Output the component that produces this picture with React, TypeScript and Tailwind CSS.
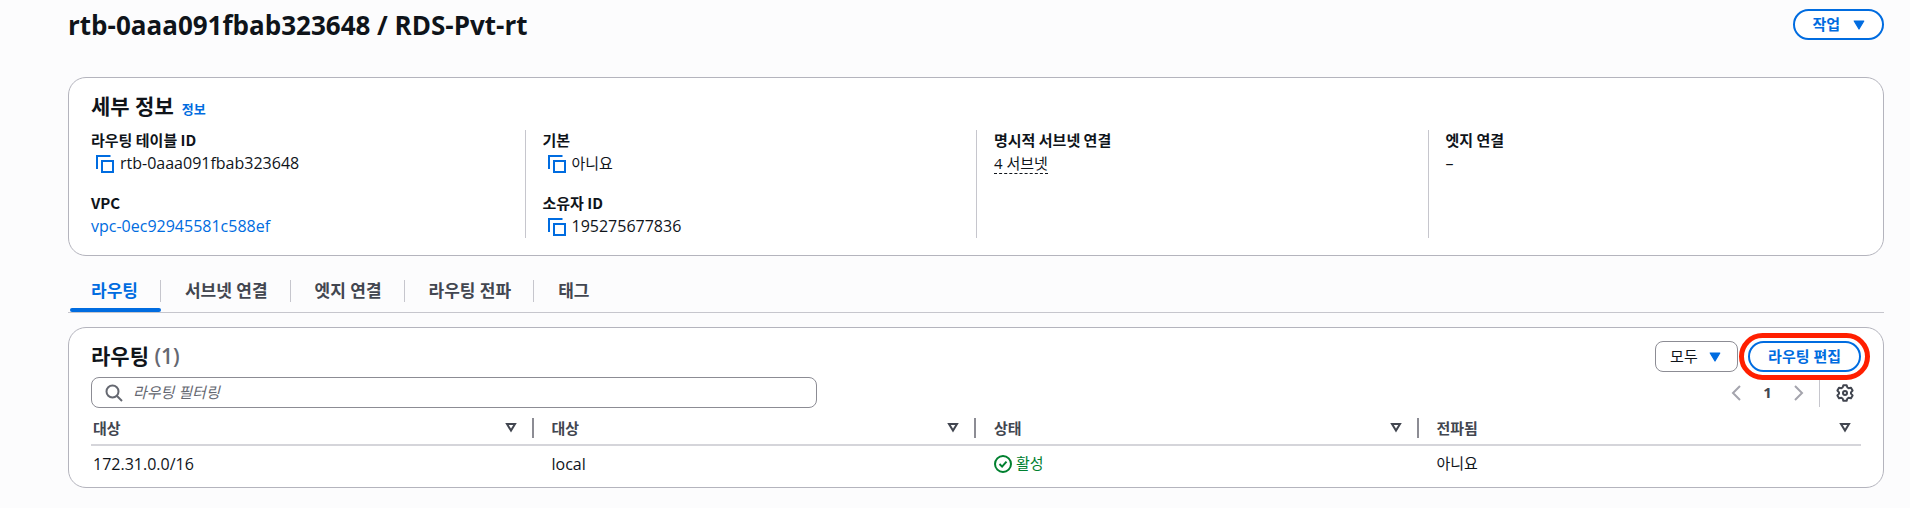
import React from "react";

function CopyIcon() {
  return (
    <svg width="18" height="18" viewBox="0 0 18 18" fill="none" stroke="#006ce0" strokeWidth="2" aria-hidden="true">
      <path d="M14.5 1H1v13" />
      <path d="M6 6h11v11H6z" />
    </svg>
  );
}

function Caret() {
  return (
    <svg width="12" height="10" viewBox="0 0 12 10" aria-hidden="true">
      <path d="M1.2 1h9.6L6 9z" fill="#006ce0" stroke="#006ce0" strokeWidth="1.2" strokeLinejoin="round" />
    </svg>
  );
}

function SortIcon() {
  return (
    <svg width="12" height="11" viewBox="0 0 12 11" fill="none" stroke="#424650" strokeWidth="2" aria-hidden="true">
      <path d="M2 2h8L6 8.6z" />
    </svg>
  );
}

function Copyable({ children }: { children: React.ReactNode }) {
  return (
    <div className="flex items-center gap-[6px] pl-[5px]">
      <button type="button" aria-label="복사">
        <CopyIcon />
      </button>
      <span>{children}</span>
    </div>
  );
}

function Field({ label, children }: { label: string; children: React.ReactNode }) {
  return (
    <div>
      <dt className="h-[22px] font-['Noto_Sans_CJK_KR',sans-serif] text-[15px] leading-5 font-bold">{label}</dt>
      <dd className="h-[23px] leading-[23px]">{children}</dd>
    </div>
  );
}

const tabs = ["라우팅", "서브넷 연결", "엣지 연결", "라우팅 전파", "태그"];
const headers = ["대상", "대상", "상태", "전파됨"];
const columnClass =
  "grid content-start gap-[18px] border-[#c6c6cd] not-first:-ml-[18px] not-first:border-l not-first:pl-[17px]";
const cardClass = "rounded-[18px] border border-[#b4b4bd] bg-white px-[22px]";

export default function App() {
  return (
    <main className="min-h-screen bg-[#fcfcfd] pr-[26px] pl-[68px] font-['Open_Sans','Noto_Sans_CJK_KR',sans-serif] text-base text-[#0f141a]">
      <header className="flex items-start justify-between pt-[9px]">
        <h1 className="text-[26px] leading-8 font-bold">rtb-0aaa091fbab323648 / RDS-Pvt-rt</h1>
        <button
          type="button"
          className="flex h-[31px] items-center gap-[13px] rounded-full border-2 border-[#006ce0] bg-white px-[17px] text-[15px] font-bold text-[#006ce0]"
        >
          작업
          <Caret />
        </button>
      </header>

      <section className={`${cardClass} mt-9 pt-4 pb-[17px]`}>
        <div className="flex items-baseline gap-2">
          <h2 className="text-[21px] leading-6 font-bold">세부 정보</h2>
          <a href="#info" className="text-[13px] leading-4 font-bold text-[#006ce0]">
            정보
          </a>
        </div>
        <dl className="mt-3 grid grid-cols-4 gap-9">
          <div className={columnClass}>
            <Field label="라우팅 테이블 ID">
              <Copyable>rtb-0aaa091fbab323648</Copyable>
            </Field>
            <Field label="VPC">
              <a href="#vpc" className="font-medium text-[#006ce0]">
                vpc-0ec92945581c588ef
              </a>
            </Field>
          </div>
          <div className={columnClass}>
            <Field label="기본">
              <Copyable>
                <span className="text-[15px]">아니요</span>
              </Copyable>
            </Field>
            <Field label="소유자 ID">
              <Copyable>195275677836</Copyable>
            </Field>
          </div>
          <div className={columnClass}>
            <Field label="명시적 서브넷 연결">
              <button type="button" className="border-b border-dashed border-[#0f141a] text-[15px] leading-5">
                4 서브넷
              </button>
            </Field>
          </div>
          <div className={columnClass}>
            <Field label="엣지 연결">–</Field>
          </div>
        </dl>
      </section>

      <div role="tablist" className="flex border-b border-[#c6c6cd] pt-[18px] pl-[2px]">
        {tabs.map((tab, i) => (
          <div key={tab} className="group flex flex-col">
            <button
              type="button"
              role="tab"
              aria-selected={i === 0}
              className="my-[6px] h-[22px] border-[#c6c6cd] pr-[22px] pl-6 text-[17px] leading-[22px] font-bold text-[#424650] group-first:pl-[21px] group-not-last:border-r aria-selected:text-[#006ce0]"
            >
              {tab}
            </button>
            <span className="h-[4px] rounded-full group-first:bg-[#006ce0]" />
          </div>
        ))}
      </div>

      <section className={`${cardClass} mt-[14px] pt-[13px] pb-[6px]`}>
        <div className="flex items-center justify-between">
          <h2 className="text-[21px] leading-[31px] font-bold">
            라우팅 <span className="font-semibold text-[#656871]">(1)</span>
          </h2>
          <div className="flex gap-[10px]">
            <div className="relative">
              <select
                aria-label="보기"
                className="h-[31px] w-[83px] appearance-none rounded-lg border border-[#8c8c94] bg-white pl-[14px] text-[15px]"
              >
                <option>모두</option>
              </select>
              <span className="pointer-events-none absolute top-[11px] right-[17px]">
                <Caret />
              </span>
            </div>
            <div className="relative">
              <button
                type="button"
                className="h-[31px] rounded-full border-2 border-[#006ce0] bg-white px-[18px] text-[15px] font-bold text-[#006ce0]"
              >
                라우팅 편집
              </button>
              <span className="pointer-events-none absolute -inset-x-[9px] -inset-y-2 rounded-full border-[5px] border-[#ff1f00]" />
            </div>
          </div>
        </div>

        <div className="mt-[5px] flex items-center justify-between">
          <label className="flex h-[31px] w-[41%] items-center gap-[10px] rounded-lg border border-[#8c8c94] bg-white px-[13px]">
            <svg width="18" height="18" viewBox="0 0 18 18" fill="none" stroke="#656871" strokeWidth="2" aria-hidden="true">
              <circle cx="7.5" cy="7.5" r="6" />
              <path d="m12 12 5 5" />
            </svg>
            <input
              type="search"
              aria-label="라우팅 필터링"
              placeholder="라우팅 필터링"
              className="min-w-0 flex-1 text-[15px] outline-none placeholder:text-[#656871] placeholder:italic"
            />
          </label>
          <div className="flex h-[31px] items-center">
            <button type="button" aria-label="이전 페이지">
              <svg width="10" height="16" viewBox="0 0 10 16" fill="none" stroke="#a4a4ad" strokeWidth="2" aria-hidden="true">
                <path d="M9 1 2 8l7 7" />
              </svg>
            </button>
            <span className="w-[53px] text-center text-[15px] font-bold text-[#424650]">1</span>
            <button type="button" aria-label="다음 페이지">
              <svg width="10" height="16" viewBox="0 0 10 16" fill="none" stroke="#a4a4ad" strokeWidth="2" aria-hidden="true">
                <path d="m1 1 7 7-7 7" />
              </svg>
            </button>
            <span className="ml-[15px] h-7 border-l border-[#c6c6cd]" />
            <button type="button" aria-label="기본 설정" className="mr-[7px] ml-4">
              <svg width="18" height="18" viewBox="0 0 18 18" fill="none" stroke="#424650" strokeWidth="2" strokeLinejoin="round" aria-hidden="true">
                <path d="M7.4 1.2h3.2l.8 2.3 1.2.7 2.4-.5 1.6 2.8L15 8.3v1.4l1.6 1.8-1.6 2.8-2.4-.5-1.2.7-.8 2.3H7.4l-.8-2.3-1.2-.7-2.4.5-1.6-2.8L3 9.7V8.3L1.4 6.5 3 3.7l2.4.5 1.2-.7z" />
                <circle cx="9" cy="9" r="2" />
              </svg>
            </button>
          </div>
        </div>

        <table className="w-full table-fixed">
          <thead>
            <tr className="h-[37px] border-b-2 border-[#d5d5da]">
              {headers.map((h, i) => (
                <th key={i} scope="col" className="group p-0 pt-[3px] text-left text-[15px] font-bold text-[#424650]">
                  <div className="flex h-5 items-center justify-between border-[#8c8c94] pr-[15px] pl-[18px] leading-5 group-first:pl-[2px] group-last:pr-[10px] group-not-last:border-r-2">
                    {h}
                    <button type="button" aria-label={`${h} 정렬`}>
                      <SortIcon />
                    </button>
                  </div>
                </th>
              ))}
            </tr>
          </thead>
          <tbody>
            <tr className="h-9">
              <td className="p-0 pl-[2px]">172.31.0.0/16</td>
              <td className="p-0 pl-[18px]">local</td>
              <td className="p-0 pl-[18px]">
                <span className="flex items-center gap-1 text-[15px] text-[#00802f]">
                  <svg width="18" height="18" viewBox="0 0 18 18" fill="none" stroke="currentColor" strokeWidth="2" aria-hidden="true">
                    <circle cx="9" cy="9" r="8" />
                    <path d="m5.5 9 2.6 2.6 4.4-5" />
                  </svg>
                  활성
                </span>
              </td>
              <td className="p-0 pl-[18px] text-[15px]">아니요</td>
            </tr>
          </tbody>
        </table>
      </section>
    </main>
  );
}
